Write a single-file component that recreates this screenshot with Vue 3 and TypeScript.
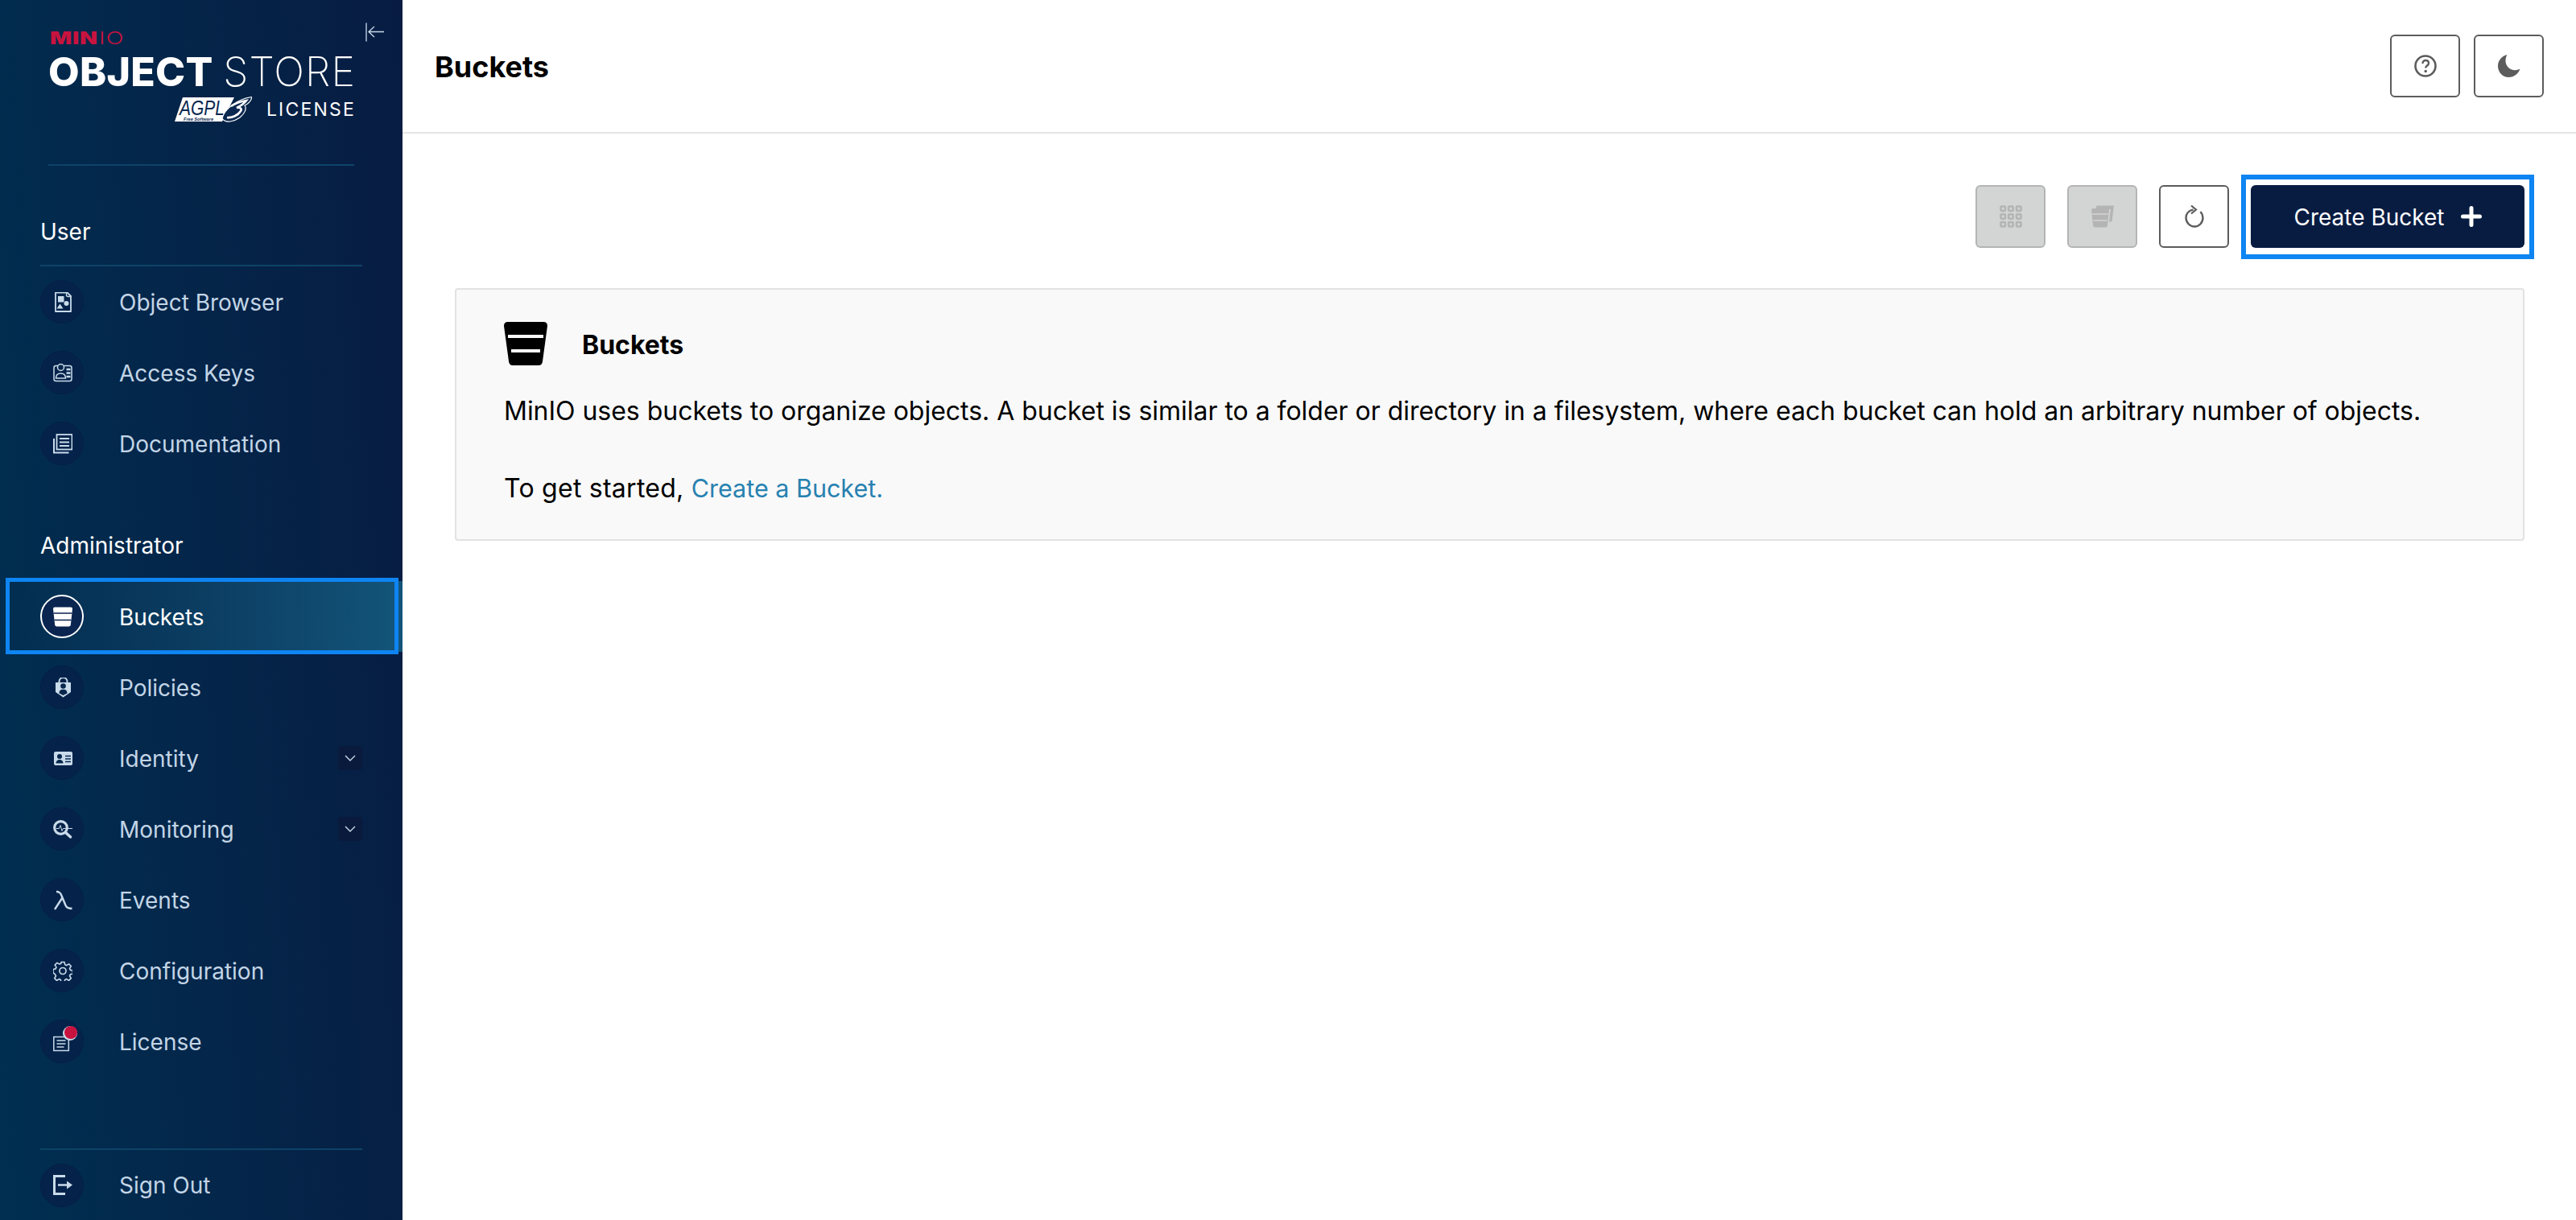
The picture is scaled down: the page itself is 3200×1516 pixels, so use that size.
<script setup lang="ts">
interface NavItem {
  label: string;
  icon: string;
  chevron?: boolean;
  active?: boolean;
  dot?: boolean;
}

const c = "#c9dbea";

const icons: Record<string, string> = {
  browser: `<path d="M3 .5h14.500l4.500 4.500v19H3z" fill="none" stroke="${c}" stroke-width="1.800" stroke-linejoin="round"/><path d="M16.500 .5v3a2 2 0 0 0 2 2H22" fill="none" stroke="${c}" stroke-width="1.400"/><rect x="6" y="5" width="7.500" height="7.500" fill="${c}"/><circle cx="16.500" cy="14" r="3" fill="${c}"/><path d="M8.500 14.500l4 6h-8z" fill="${c}"/>`,
  keys: `<rect x="1" y="3.500" width="22" height="19" rx="2.500" fill="none" stroke="${c}" stroke-width="1.500"/><circle cx="9.500" cy="5.500" r="4" fill="#06264d" stroke="${c}" stroke-width="1.500"/><path d="M3.500 19c0-4 2.500-6 6-6s6 2 6 6z" fill="none" stroke="${c}" stroke-width="1.500"/><path d="M16.500 8h5M16.500 12.500h5M16.500 17h5" stroke="${c}" stroke-width="2.500"/>`,
  docs: `<path d="M1 6v17.500h18.500" fill="none" stroke="${c}" stroke-width="2"/><rect x="4.500" y="1" width="19" height="18.500" fill="none" stroke="${c}" stroke-width="1.800"/><path d="M8 6h12M8 10.500h12M8 15h12" stroke="${c}" stroke-width="2"/>`,
  bucket: `<path d="M0 2.500Q0 .5 2 .5h20q2 0 2 2L21.800 22.500q-.3 2-2.300 2h-15q-2 0-2.300-2z" fill="#fff"/><path d="M.5 8h23M1.500 16.500h21" stroke="#0b2550" stroke-width="1.300"/>`,
  policies: `<path d="M7.500 7V5a5 5 0 0 1 10 0v2" fill="none" stroke="${c}" stroke-width="2"/><path d="M3 6h19v12l-9.500 6.500L3 18z" fill="${c}"/><circle cx="12.500" cy="10.500" r="3.300" fill="#06264d"/><path d="M7.500 19.500c0-3.500 2-4.800 5-4.800s5 1.300 5 4.800l-5 2.600z" fill="#06264d"/>`,
  identity: `<rect x="1" y="4" width="23" height="17" rx="2" fill="${c}"/><circle cx="8" cy="10" r="3" fill="#06264d"/><path d="M3.500 18.500c0-3 2-4.500 4.500-4.500s4.500 1.500 4.500 4.500z" fill="#06264d"/><path d="M15 9.500h7M15 13h7M15 16.500h7" stroke="#06264d" stroke-width="1.500"/>`,
  monitoring: `<circle cx="9.500" cy="10.500" r="7.800" fill="none" stroke="${c}" stroke-width="3.200"/><path d="M15.500 16.500l6 5.500" stroke="${c}" stroke-width="3.500" stroke-linecap="round"/><path d="M4 11.500h3.500l1.500-4 2 7 1.500-3H24" fill="none" stroke="${c}" stroke-width="1"/>`,
  events: `<path d="M4 2c3.500 0 5 1 6.500 5l5 12c1.200 3 3 4 8 4" fill="none" stroke="${c}" stroke-width="2.400"/><path d="M11.500 9.500L2 24" fill="none" stroke="${c}" stroke-width="2.400"/>`,
  config: `<path d="M10 1h4l.7 3.200 2 .9 2.800-1.800 2.800 2.800-1.800 2.800.9 2 3.100.7v4l-3.100.7-.9 2 1.800 2.800-2.800 2.800-2.800-1.800-2 .9-.7 3.100h-4l-.7-3.100-2-.9-2.800 1.800-2.800-2.800 1.800-2.800-.9-2L0 14.100v-4l3.100-.7.900-2-1.800-2.800L5 1.800l2.800 1.800 2-.9z" transform="translate(0 .5)" fill="none" stroke="${c}" stroke-width="1.600" stroke-linejoin="round"/><circle cx="12" cy="12.500" r="4" fill="none" stroke="${c}" stroke-width="1.700"/>`,
  license: `<rect x=".8" y="6.500" width="18.500" height="17" fill="none" stroke="${c}" stroke-width="1.500"/><path d="M4.500 11h11M4.500 15h11M4.500 19h9" stroke="${c}" stroke-width="1.700"/>`,
  signout: `<path d="M15 1.500H1.500v22H15" fill="none" stroke="${c}" stroke-width="3"/><path d="M6 12.500h13" stroke="${c}" stroke-width="2.500"/><path d="M17 7.500l7 5-7 5z" fill="${c}"/>`,
};

const userItems: NavItem[] = [
  { label: "Object Browser", icon: "browser" },
  { label: "Access Keys", icon: "keys" },
  { label: "Documentation", icon: "docs" },
];

const adminItems: NavItem[] = [
  { label: "Buckets", icon: "bucket", active: true },
  { label: "Policies", icon: "policies" },
  { label: "Identity", icon: "identity", chevron: true },
  { label: "Monitoring", icon: "monitoring", chevron: true },
  { label: "Events", icon: "events" },
  { label: "Configuration", icon: "config" },
  { label: "License", icon: "license", dot: true },
];

const signOut: NavItem = { label: "Sign Out", icon: "signout" };
</script>

<template>
  <div class="app">
    <aside class="sidebar">
      <div class="brand">
        <svg class="collapse" viewBox="0 0 24 24" width="24" height="24">
          <path d="M1 .5v23M23 11.500H4M11 5l-7 6.500 7 6.500" fill="none" stroke="#c9dbea" stroke-width="1.300" />
        </svg>
        <div class="minio"><b>MIN</b><span>IO</span></div>
        <div class="product"><b>OBJECT</b><span>STORE</span></div>
        <div class="license-line">
          <svg class="agpl" viewBox="0 0 96 32" width="96" height="32">
            <path d="M10 1h64L59 31H0z" fill="#fff" />
            <text x="6" y="23" class="agpl-main" textLength="56" lengthAdjust="spacingAndGlyphs">AGPL</text>
            <text x="11" y="29.500" class="agpl-sub" textLength="37" lengthAdjust="spacingAndGlyphs">Free Software</text>
            <path d="M59 27C62 15 78 3 96 .5c-1 5-5 8.500-9 10.500 3 4 0 10-6 15-7 5-18 8-22 1z" fill="#0a2850" stroke="#fff" stroke-width="1.200" />
            <path d="M70 12c6-4 13-6 19-7-3 4-8 7-12 9 4-1 7 1 5 4-3 5-11 9-17 8" fill="none" stroke="#fff" stroke-width="2.600" />
          </svg>
          <span class="license-text">LICENSE</span>
        </div>
      </div>

      <div class="section-label with-rule">User</div>
      <a v-for="item in userItems" :key="item.label" class="nav-row">
        <span class="nav-icon">
          <svg viewBox="0 0 24 25" width="24" height="25" v-html="icons[item.icon]"></svg>
        </span>
        <span class="nav-text">{{ item.label }}</span>
      </a>

      <div class="section-label admin">Administrator</div>
      <a
        v-for="item in adminItems"
        :key="item.label"
        class="nav-row"
        :class="{ active: item.active }"
      >
        <span class="nav-icon">
          <svg viewBox="0 0 24 25" width="24" height="25" v-html="icons[item.icon]"></svg>
          <i v-if="item.dot" class="dot"></i>
        </span>
        <span class="nav-text">{{ item.label }}</span>
        <span v-if="item.chevron" class="chevron">
          <svg viewBox="0 0 14 8" width="14" height="8">
            <path d="M1 1l6 6 6-6" fill="none" stroke="#c9dbea" stroke-width="1.400" />
          </svg>
        </span>
      </a>

      <div class="spacer"></div>
      <div class="footer">
        <a class="nav-row foot-row">
          <span class="nav-icon">
            <svg viewBox="0 0 24 25" width="24" height="25" v-html="icons[signOut.icon]"></svg>
          </span>
          <span class="nav-text">{{ signOut.label }}</span>
        </a>
      </div>
    </aside>

    <main class="main">
      <header class="topbar">
        <h1>Buckets</h1>
        <div class="top-actions">
          <button class="icon-btn" aria-label="Help">
            <svg viewBox="0 0 28 28" width="28" height="28">
              <circle cx="14" cy="14" r="12.500" fill="none" stroke="#5c5c5c" stroke-width="2.600" />
              <path d="M10.500 11c0-2.500 1.500-4 3.700-4s3.800 1.300 3.800 3.500c0 3-3.800 3-3.800 6" fill="none" stroke="#5c5c5c" stroke-width="2.400" />
              <circle cx="14.200" cy="20.500" r="1.700" fill="#5c5c5c" />
            </svg>
          </button>
          <button class="icon-btn" aria-label="Dark mode">
            <svg viewBox="0 0 28 28" width="28" height="28">
              <path d="M11.500 0C5 1.500 0 7 0 14c0 8 6 14 13.500 14 6.500 0 12-4.500 14-10.500-2 1.200-4 1.700-6 1.700-7 0-12-5.200-12-11.700 0-2.800.7-5.300 2-7.500z" fill="#5c5c5c" />
            </svg>
          </button>
        </div>
      </header>

      <div class="toolbar">
        <button class="icon-btn disabled" aria-label="Select multiple">
          <svg viewBox="0 0 28 28" width="28" height="28">
            <g fill="none" stroke="#b4b4b4" stroke-width="2.600">
              <rect x="1.500" y="1.500" width="5.500" height="5.500" rx="1" />
              <rect x="11.200" y="1.500" width="5.500" height="5.500" rx="1" />
              <rect x="21" y="1.500" width="5.500" height="5.500" rx="1" />
              <rect x="1.500" y="11.200" width="5.500" height="5.500" rx="1" />
              <rect x="11.200" y="11.200" width="5.500" height="5.500" rx="1" />
              <rect x="21" y="11.200" width="5.500" height="5.500" rx="1" />
              <rect x="1.500" y="21" width="5.500" height="5.500" rx="1" />
              <rect x="11.200" y="21" width="5.500" height="5.500" rx="1" />
              <rect x="21" y="21" width="5.500" height="5.500" rx="1" />
            </g>
          </svg>
        </button>
        <button class="icon-btn disabled" aria-label="Replicate">
          <svg viewBox="0 0 28 28" width="28" height="28">
            <path d="M6 2q0-1.500 1.500-1.500H28l-2.500 20H22L24 5H6z" fill="#b4b4b4" />
            <path d="M0 6q0-2 2-2h18q2 0 2 2l-2 19q-.2 2.500-2.500 2.500h-13Q2.200 27.500 2 25z" fill="#b4b4b4" />
            <path d="M1 11h20M2.500 19h17" stroke="#d3d4d4" stroke-width="1.300" />
          </svg>
        </button>
        <button class="icon-btn" aria-label="Refresh">
          <svg viewBox="0 0 24 28" width="24" height="28">
            <path d="M10.500 5.500C5 6.500 1.500 10.500 1.500 15.500c0 6 4.700 11 10.700 11s10.300-5 10.300-11c0-3-1.300-5.500-3-7.500" fill="none" stroke="#5c5c5c" stroke-width="2.400" />
            <path d="M8 .5l6 5-6 5" fill="none" stroke="#5c5c5c" stroke-width="2.200" />
          </svg>
        </button>
        <button class="create-btn">
          <span class="create-label">Create Bucket</span>
          <svg viewBox="0 0 26 26" width="26" height="26">
            <path d="M13 2.500v21M2.500 13h21" stroke="#fff" stroke-width="5" stroke-linecap="round" />
          </svg>
        </button>
      </div>

      <section class="card">
        <div class="card-head">
          <svg viewBox="0 0 54 54" width="54" height="54">
            <path d="M0 5q0-5 5-5h44q5 0 5 5l-6 44q-.5 5-5 5H11q-4.500 0-5-5z" fill="#000" />
            <path d="M5 18h44M9 36h36" stroke="#f9f9f9" stroke-width="4" />
          </svg>
          <h2>Buckets</h2>
        </div>
        <p class="first">
          MinIO uses buckets to organize objects. A bucket is similar to a folder or directory in a filesystem, where each bucket can hold an arbitrary number of objects.
        </p>
        <p class="second">To get started, <a class="link">Create a Bucket.</a></p>
      </section>
    </main>
  </div>
</template>

<style>
html,
body {
  margin: 0;
  background: #fff;
}
</style>

<style scoped>
.app {
  display: flex;
  width: 100%;
  height: 1516px;
  overflow: hidden;
  font-family: Inter, "Noto Sans", sans-serif;
}

.sidebar {
  width: 500px;
  flex: none;
  display: flex;
  flex-direction: column;
  height: 100%;
  background: linear-gradient(86deg, #002f51 0%, #081c42 100%);
  color: #fff;
}

.brand {
  position: relative;
  box-sizing: border-box;
  height: 206px;
  margin: 0 60px;
  padding-top: 39px;
  border-bottom: 2px solid #0e4368;
}

.collapse {
  position: absolute;
  top: 28px;
  right: -38px;
}

.minio {
  display: flex;
  height: 17px;
  font-size: 21px;
  line-height: 17px;
  color: #c8133f;
  margin-left: 2px;
  transform: scaleX(1.36);
  transform-origin: left center;
}

.minio b {
  font-weight: 900;
  letter-spacing: 0.5px;
}

.minio span {
  font-weight: 300;
  margin-left: 1px;
  letter-spacing: 1px;
}

.product {
  display: flex;
  justify-content: space-between;
  margin-top: 11px;
  font-size: 50px;
  line-height: 44px;
  height: 44px;
  white-space: nowrap;
}

.product b {
  font-weight: 800;
  letter-spacing: 0.3px;
}

.product span {
  font-weight: 200;
  letter-spacing: 1.100px;
  margin-right: -2px;
}

.license-line {
  display: flex;
  justify-content: flex-end;
  align-items: center;
  gap: 18px;
  margin-top: 9px;
}

.agpl {
  flex: none;
}

.agpl-main {
  font-family: "Liberation Sans", sans-serif;
  font-style: italic;
  font-size: 25px;
  fill: #0a2850;
}

.agpl-sub {
  font-family: "Liberation Sans", sans-serif;
  font-weight: 700;
  font-style: italic;
  font-size: 5.500px;
  fill: #0a2850;
}

.license-text {
  font-size: 23px;
  font-weight: 400;
  letter-spacing: 2.200px;
  line-height: 32px;
  margin-right: -2px;
}

.section-label {
  box-sizing: border-box;
  margin: 0 50px;
  font-size: 28px;
  line-height: 34px;
  color: #fff;
  display: flex;
  align-items: flex-end;
}

.with-rule {
  height: 125px;
  padding-bottom: 24px;
  border-bottom: 2px solid #0e4368;
}

.admin {
  height: 127px;
  padding-bottom: 27px;
}

.nav-row {
  position: relative;
  flex: none;
  display: flex;
  align-items: center;
  box-sizing: border-box;
  height: 88px;
  padding: 0 50px;
  color: #c3d5e6;
}

.nav-row.active {
  color: #fff;
  background: linear-gradient(90deg, rgba(8, 58, 92, 0) 0%, #13557a 100%);
}

.nav-row.active::after {
  content: "";
  position: absolute;
  left: 7px;
  right: 5px;
  top: -4px;
  bottom: -3px;
  border: 5px solid #0e85f2;
  pointer-events: none;
}

.nav-icon {
  position: relative;
  flex: none;
  display: flex;
  align-items: center;
  justify-content: center;
  box-sizing: border-box;
  width: 54px;
  height: 54px;
  padding-left: 2px;
  border-radius: 50%;
  background: #05234a;
  border: 1px solid #051f47;
}

.active .nav-icon {
  background: #0a2550;
  border: 2px solid #fff;
}

.dot {
  position: absolute;
  width: 16px;
  height: 16px;
  top: 7px;
  left: 29px;
  border-radius: 50%;
  background: #c8133f;
  box-shadow: -1px 1px 0 1px #c9dbea;
}

.nav-text {
  margin-left: 44px;
  padding-top: 1px;
  font-size: 28px;
  line-height: 34px;
}

.chevron {
  margin-left: auto;
  width: 30px;
  height: 30px;
  display: flex;
  align-items: center;
  justify-content: center;
  background: #0a1a3c;
  border-radius: 4px;
}

.spacer {
  flex: 1;
}

.footer {
  flex: none;
}

.footer::before {
  content: "";
  display: block;
  height: 2px;
  margin: 0 50px;
  background: #0e4368;
}

.foot-row {
  height: 87px;
}

.main {
  flex: 1;
  min-width: 0;
  display: flex;
  flex-direction: column;
  background: #fff;
}

.topbar {
  flex: none;
  box-sizing: border-box;
  height: 166px;
  display: flex;
  align-items: center;
  justify-content: space-between;
  padding: 0 40px;
  border-bottom: 2px solid #e5e5e5;
}

.topbar h1 {
  margin: 2px 0 0;
  font-size: 36px;
  font-weight: 700;
  color: #000;
}

.top-actions {
  display: flex;
  gap: 17px;
}

.icon-btn {
  box-sizing: border-box;
  width: 87px;
  height: 78px;
  padding: 0;
  display: flex;
  align-items: center;
  justify-content: center;
  background: #fff;
  border: 2px solid #5c5c5c;
  border-radius: 6px;
}

.icon-btn.disabled {
  background: #d3d4d4;
  border-color: #b4b4b4;
}

.toolbar {
  flex: none;
  display: flex;
  justify-content: flex-end;
  gap: 27px;
  margin-top: 64px;
  padding-right: 64px;
}

.create-btn {
  position: relative;
  box-sizing: border-box;
  width: 340px;
  height: 78px;
  display: flex;
  align-items: center;
  justify-content: center;
  gap: 20px;
  background: #081c42;
  color: #fff;
  border: none;
  border-radius: 6px;
  font-family: inherit;
  font-size: 28px;
}

.create-label {
  padding-top: 2px;
}

.create-btn::after {
  content: "";
  position: absolute;
  left: -12px;
  right: -12px;
  top: -13px;
  bottom: -14px;
  border: 6px solid #0e85f2;
  pointer-events: none;
}

.card {
  flex: none;
  box-sizing: border-box;
  margin: 50px 64px 0 65px;
  padding: 40px 59px 43px;
  background: #f9f9f9;
  border: 2px solid #e2e2e2;
  border-radius: 4px;
  color: #000;
  font-size: 32px;
}

.card-head {
  display: flex;
  align-items: center;
  gap: 43px;
  height: 54px;
}

.card-head h2 {
  margin: 2px 0 0;
  font-size: 32px;
  font-weight: 700;
}

.card p {
  margin: 0;
  line-height: 40px;
  white-space: nowrap;
}

.card .first {
  margin-top: 37px;
  letter-spacing: -0.025px;
}

.card .second {
  margin-top: 56px;
  letter-spacing: 0.25px;
}

.link {
  color: #2781b0;
  font-size: 30.500px;
  letter-spacing: 0;
}
</style>
